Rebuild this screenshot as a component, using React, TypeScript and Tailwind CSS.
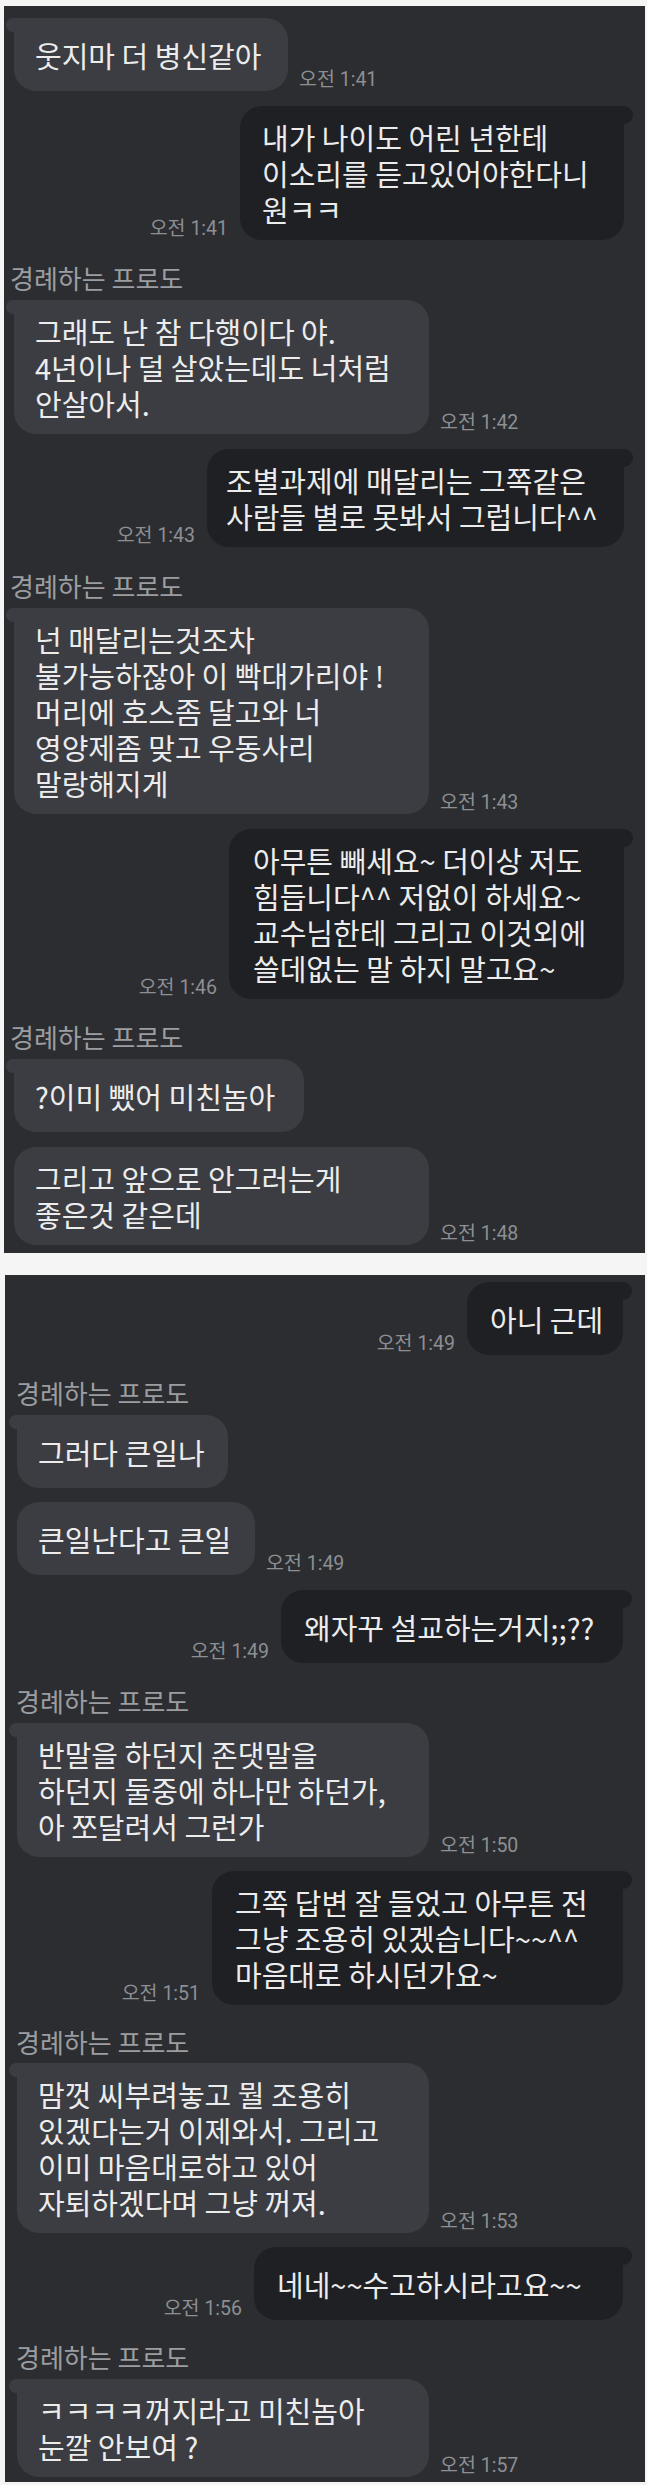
import { FunctionComponent } from "react";

type Item =
    | { kind: "name"; mt: string }
    | { kind: "in"; lines: string[]; w: string; mt: string; time?: string; tail?: boolean }
    | { kind: "out"; lines: string[]; w: string; mt: string; time: string; pl: string };

const NAME = "경례하는 프로도";

const panelOne: Item[] = [
    { kind: "in", lines: ["웃지마 더 병신같아"], w: "w-[274px]", mt: "mt-0", time: "오전 1:41", tail: true },
    { kind: "out", lines: ["내가 나이도 어린 년한테", "이소리를 듣고있어야한다니", "원ㅋㅋ"], w: "w-[384px]", mt: "mt-[15px]", time: "오전 1:41", pl: "pl-[22px]" },
    { kind: "name", mt: "mt-[23px]" },
    { kind: "in", lines: ["그래도 난 참 다행이다 야.", "4년이나 덜 살았는데도 너처럼", "안살아서."], w: "w-[415px]", mt: "mt-[7px]", time: "오전 1:42", tail: true },
    { kind: "out", lines: ["조별과제에 매달리는 그쪽같은", "사람들 별로 못봐서 그럽니다^^"], w: "w-[417px]", mt: "mt-[15px]", time: "오전 1:43", pl: "pl-[19px]" },
    { kind: "name", mt: "mt-[24px]" },
    { kind: "in", lines: ["넌 매달리는것조차", "불가능하잖아 이 빡대가리야 !", "머리에 호스좀 달고와 너", "영양제좀 맞고 우동사리", "말랑해지게"], w: "w-[415px]", mt: "mt-[7px]", time: "오전 1:43", tail: true },
    { kind: "out", lines: ["아무튼 빼세요~ 더이상 저도", "힘듭니다^^ 저없이 하세요~", "교수님한테 그리고 이것외에", "쓸데없는 말 하지 말고요~"], w: "w-[395px]", mt: "mt-[15px]", time: "오전 1:46", pl: "pl-[24px]" },
    { kind: "name", mt: "mt-[23px]" },
    { kind: "in", lines: ["?이미 뺐어 미친놈아"], w: "w-[290px]", mt: "mt-[7px]", tail: true },
    { kind: "in", lines: ["그리고 앞으로 안그러는게", "좋은것 같은데"], w: "w-[415px]", mt: "mt-[15px]", time: "오전 1:48" },
];

const panelTwo: Item[] = [
    { kind: "out", lines: ["아니 근데"], w: "w-[156px]", mt: "mt-0", time: "오전 1:49", pl: "pl-[23px]" },
    { kind: "name", mt: "mt-[23px]" },
    { kind: "in", lines: ["그러다 큰일나"], w: "w-[211px]", mt: "mt-[7px]", tail: true },
    { kind: "in", lines: ["큰일난다고 큰일"], w: "w-[238px]", mt: "mt-[14px]", time: "오전 1:49" },
    { kind: "out", lines: ["왜자꾸 설교하는거지;;??"], w: "w-[342px]", mt: "mt-[15px]", time: "오전 1:49", pl: "pl-[23px]" },
    { kind: "name", mt: "mt-[23px]" },
    { kind: "in", lines: ["반말을 하던지 존댓말을", "하던지 둘중에 하나만 하던가,", "아 쪼달려서 그런가"], w: "w-[412px]", mt: "mt-[7px]", time: "오전 1:50", tail: true },
    { kind: "out", lines: ["그쪽 답변 잘 들었고 아무튼 전", "그냥 조용히 있겠습니다~~^^", "마음대로 하시던가요~"], w: "w-[411px]", mt: "mt-[14px]", time: "오전 1:51", pl: "pl-[23px]" },
    { kind: "name", mt: "mt-[22px]" },
    { kind: "in", lines: ["맘껏 씨부려놓고 뭘 조용히", "있겠다는거 이제와서. 그리고", "이미 마음대로하고 있어", "자퇴하겠다며 그냥 꺼져."], w: "w-[412px]", mt: "mt-[6px]", time: "오전 1:53", tail: true },
    { kind: "out", lines: ["네네~~수고하시라고요~~"], w: "w-[369px]", mt: "mt-[14px]", time: "오전 1:56", pl: "pl-[23px]" },
    { kind: "name", mt: "mt-[22px]" },
    { kind: "in", lines: ["ㅋㅋㅋㅋ꺼지라고 미친놈아", "눈깔 안보여 ?"], w: "w-[412px]", mt: "mt-[7px]", time: "오전 1:57", tail: true },
];

const Time: FunctionComponent<{ text: string }> = ({ text }) => (
    <span className="shrink-0 whitespace-nowrap text-[19.5px] leading-[22px] text-[#8d8f93] font-['Roboto','Noto_Sans_CJK_KR',sans-serif]">
        {text}
    </span>
);

const Lines: FunctionComponent<{ lines: string[] }> = ({ lines }) => (
    <div className="text-[29px] leading-[36px] text-[#ececed]">
        {lines.map((l, i) => (
            <div key={i} className="whitespace-nowrap">{l}</div>
        ))}
    </div>
);

const Chat: FunctionComponent<{ items: Item[]; inLeft: string; nameLeft: string; outRight: string }> = ({ items, inLeft, nameLeft, outRight }) => {
    return (
        <>
            {items.map((it, i) => {
                if (it.kind === "name") {
                    return (
                        <div key={i} className={`${it.mt} ${nameLeft} text-[26px] leading-[30px] text-[#9c9da1]`}>
                            {NAME}
                        </div>
                    );
                }
                if (it.kind === "in") {
                    return (
                        <div key={i} className={`${it.mt} ${inLeft} flex items-end gap-[11px]`}>
                            <div className={`relative ${it.w} min-h-[73px] py-[13px] pl-[21px] flex flex-col justify-center bg-[#3b3d42] rounded-[22px] ${it.tail ? "rounded-tl-none" : ""}`}>
                                {it.tail && <span className="absolute left-[-8px] top-0 w-[16px] h-[14px] bg-[#3b3d42] rounded-l-[7px]" />}
                                <Lines lines={it.lines} />
                            </div>
                            {it.time && <Time text={it.time} />}
                        </div>
                    );
                }
                return (
                    <div key={i} className={`${it.mt} ${outRight} flex justify-end items-end gap-[12px]`}>
                        <Time text={it.time} />
                        <div className={`relative ${it.w} min-h-[73px] py-[13px] ${it.pl} flex flex-col justify-center bg-[#1f2023] rounded-[22px] rounded-tr-none`}>
                            <span className="absolute right-[-9px] top-0 w-[18px] h-[18px] bg-[#1f2023] rounded-r-[9px]" />
                            <Lines lines={it.lines} />
                        </div>
                    </div>
                );
            })}
        </>
    );
};

const App: FunctionComponent = () => {
    return (
        <div className="w-[647px] h-[2485px] bg-[#f5f5f5] pt-[6px] overflow-hidden font-['Noto_Sans_CJK_KR','Noto_Sans',sans-serif]">
            <div className="ml-[4px] w-[641px] bg-[#2b2d31] pt-[12px] pb-[8px]">
                <Chat items={panelOne} inLeft="pl-[10px]" nameLeft="pl-[6px]" outRight="pr-[21px]" />
            </div>
            <div className="mt-[22px] ml-[5px] w-[640px] bg-[#2b2d31] pt-[7px] pb-[5px]">
                <Chat items={panelTwo} inLeft="pl-[12px]" nameLeft="pl-[11px]" outRight="pr-[22px]" />
            </div>
        </div>
    );
};

export default App;
